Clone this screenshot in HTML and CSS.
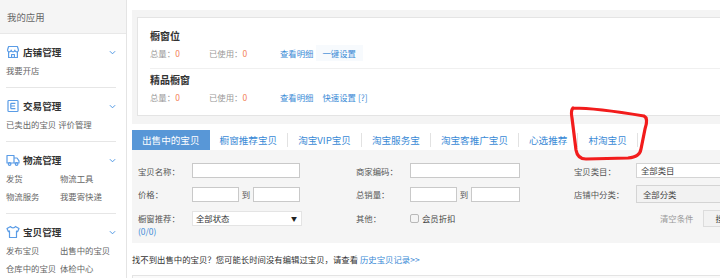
FILE: index.html
```html
<!DOCTYPE html>
<html lang="zh-CN">
<head>
    <meta charset="UTF-8">
    <title>出售中的宝贝</title>
    <link rel="stylesheet" href="styles.css">
</head>
<body>
<div class="page">
    <nav class="sidebar">
        <div class="side-head">我的应用</div>

        <div class="group">
            <div class="group-title">
                <svg class="gicon" viewBox="0 0 14 14"><path d="M1.5 5 L2.6 1.5 H11.4 L12.5 5"/><path d="M1.5 5 a1.83 1.83 0 0 0 3.67 0 a1.83 1.83 0 0 0 3.67 0 a1.83 1.83 0 0 0 3.67 0"/><path d="M2.6 7 V12.5 H11.4 V7"/><path d="M5.6 12.5 V9.5 H8.4 V12.5"/></svg>
                <span>店铺管理</span>
                <svg class="chev" viewBox="0 0 8 5"><path d="M1 1 L4 4 L7 1"/></svg>
            </div>
            <div class="links">
                <a>我要开店</a>
            </div>
        </div>

        <div class="group">
            <div class="group-title">
                <svg class="gicon" viewBox="0 0 14 14"><rect x="2" y="1.5" width="10" height="11" rx="0.8"/><path d="M4.8 4.3 H9.4 M4.8 7 H9 M4.8 9.7 H9.4 M4.8 4.3 V9.7"/></svg>
                <span>交易管理</span>
                <svg class="chev" viewBox="0 0 8 5"><path d="M1 1 L4 4 L7 1"/></svg>
            </div>
            <div class="links">
                <a class="wide">已卖出的宝贝 评价管理</a>
            </div>
        </div>

        <div class="group">
            <div class="group-title">
                <svg class="gicon" viewBox="0 0 14 14"><path d="M1 2.5 H8 V10 H1 Z"/><path d="M8 5 H11 L13 7.8 V10 H8"/><circle cx="3.6" cy="11" r="1.3"/><circle cx="10.6" cy="11" r="1.3"/></svg>
                <span>物流管理</span>
                <svg class="chev" viewBox="0 0 8 5"><path d="M1 1 L4 4 L7 1"/></svg>
            </div>
            <div class="links">
                <a>发货</a><a>物流工具</a>
                <a>物流服务</a><a>我要寄快递</a>
            </div>
        </div>

        <div class="group">
            <div class="group-title">
                <svg class="gicon" viewBox="0 0 14 14"><path d="M4.6 1.5 L1 3.6 L2.3 6.6 L3.5 6 V12.5 H10.5 V6 L11.7 6.6 L13 3.6 L9.4 1.5 C8.8 3.2 5.2 3.2 4.6 1.5 Z"/></svg>
                <span>宝贝管理</span>
                <svg class="chev" viewBox="0 0 8 5"><path d="M1 1 L4 4 L7 1"/></svg>
            </div>
            <div class="links">
                <a>发布宝贝</a><a>出售中的宝贝</a>
                <a>仓库中的宝贝</a><a>体检中心</a>
            </div>
        </div>
    </nav>

    <main class="main">
        <div class="shelf-panel">
            <div class="shelf-card">
                <div class="shelf-item first">
                    <div class="shelf-title">橱窗位</div>
                    <div class="shelf-info">
                        <span class="stat total">总量：<em>0</em></span>
                        <span class="stat used">已使用：<em>0</em></span>
                        <a class="link">查看明细</a>
                        <a class="link act hl">一键设置</a>
                    </div>
                </div>
                <div class="shelf-item">
                    <div class="shelf-title">精品橱窗</div>
                    <div class="shelf-info">
                        <span class="stat total">总量：<em>0</em></span>
                        <span class="stat used">已使用：<em>0</em></span>
                        <a class="link">查看明细</a>
                        <a class="link act">快速设置 [?]</a>
                    </div>
                </div>
            </div>
        </div>

        <div class="tabs">
            <a class="tab active">出售中的宝贝</a>
            <a class="tab">橱窗推荐宝贝</a><i class="sep"></i>
            <a class="tab">淘宝VIP宝贝</a><i class="sep"></i>
            <a class="tab">淘宝服务宝</a><i class="sep"></i>
            <a class="tab">淘宝客推广宝贝</a><i class="sep"></i>
            <a class="tab">心选推荐</a><i class="sep"></i>
            <a class="tab">村淘宝贝</a><i class="sep"></i>
        </div>

        <form class="filter">
            <div class="row">
                <div class="fg">
                    <label>宝贝名称：</label>
                    <input class="inp full" type="text">
                </div>
                <div class="fg second">
                    <label>商家编码：</label>
                    <input class="inp full2" type="text">
                </div>
                <div class="fg third">
                    <label>宝贝类目：</label>
                    <div class="box">全部类目</div>
                </div>
            </div>
            <div class="row mid">
                <div class="fg">
                    <label>价格：</label>
                    <input class="inp half" type="text"><span class="to">到</span><input class="inp half" type="text">
                </div>
                <div class="fg second">
                    <label>总销量：</label>
                    <input class="inp half" type="text"><span class="to">到</span><input class="inp half2" type="text">
                </div>
                <div class="fg third">
                    <label>店铺中分类：</label>
                    <div class="box grey">全部分类</div>
                </div>
            </div>
            <div class="row last">
                <div class="fg">
                    <label class="two">橱窗推荐：<br><span class="blue">(0/0)</span></label>
                    <div class="sel">全部状态<span class="arrow">▼</span></div>
                </div>
                <div class="fg second">
                    <label class="plain">其他：</label>
                    <span class="check"><i class="cb"></i>会员折扣</span>
                </div>
                <div class="fg third">
                    <span class="clear">清空条件</span>
                    <span class="btn">搜索</span>
                </div>
            </div>
        </form>

        <p class="notice">找不到出售中的宝贝？您可能长时间没有编辑过宝贝，请查看 <a class="link">历史宝贝记录&gt;&gt;</a></p>
        <div class="list-box"></div>
    </main>
</div>

<svg class="mark" viewBox="0 0 720 278" width="720" height="278">
    <path d="M573 108 C 590 108, 620 112, 644 116 C 648 118, 647 123, 645 129 L 641 149 C 640 155, 636 157, 628 158 L 586 159 C 580 159, 577 156, 576 150 L 572 118 C 571 113, 571 110, 573 108"/>
</svg>
</body>
</html>
```

FILE: styles.css
```css
html, body {
    margin: 0;
    padding: 0;
}
body {
    width: 720px;
    height: 278px;
    overflow: hidden;
    background: #fff;
    font-family: "Noto Sans CJK SC", "Liberation Sans", sans-serif;
    font-size: 8.4px;
    color: #555;
}
a {
    cursor: pointer;
}
.page {
    display: flex;
    height: 278px;
}

/* sidebar */
.sidebar {
    width: 126px;
    flex: none;
    border-right: 1px solid #e4e4e4;
}
.side-head {
    height: 33px;
    line-height: 34px;
    padding-left: 7px;
    background: #f5f5f5;
    border-bottom: 1px solid #e8e8e8;
    font-size: 9.4px;
    color: #666;
}
.group {
    margin: 0 10px 0 6px;
    padding: 9px 0 8px;
    border-bottom: 1px solid #e6e6e6;
}
.group:last-child {
    border-bottom: none;
}
.group-title {
    display: flex;
    align-items: center;
    height: 18px;
}
.group-title span {
    flex: 1;
    margin-left: 3px;
    font-size: 9.6px;
    font-weight: bold;
    color: #333;
}
.gicon {
    width: 14px;
    height: 14px;
    fill: none;
    stroke: #5a9ce6;
    stroke-width: 1.2;
    stroke-linejoin: round;
}
.chev {
    width: 7px;
    height: 5px;
    fill: none;
    stroke: #4a95e3;
    stroke-width: 1.1;
}
.links {
    display: grid;
    grid-template-columns: 54px auto;
}
.links a {
    line-height: 18px;
    color: #666;
    white-space: nowrap;
}
.links a.wide {
    grid-column: 1 / 3;
}

/* main */
.main {
    flex: 1;
    min-width: 0;
    padding: 10px 0 0 5px;
}
.shelf-panel {
    background: #f4f4f4;
    padding: 7px 0 8px 5px;
}
.shelf-card {
    background: #fff;
    border: 1px solid #e4e4e4;
    border-right: none;
    padding-left: 12px;
}
.shelf-item {
    padding: 3px 0 10px;
}
.shelf-item.first {
    padding: 10px 0 7px;
    border-bottom: 1px solid #f0f0f0;
}
.shelf-title {
    line-height: 16px;
    font-size: 10px;
    font-weight: bold;
    color: #333;
}
.shelf-info {
    display: flex;
    line-height: 16px;
    margin-top: 1px;
}
.stat {
    color: #999;
}
.stat em {
    font-style: normal;
    color: #f27a52;
}
.stat.total {
    width: 59px;
}
.stat.used {
    width: 71px;
}
.link {
    color: #3a8ad6;
}
.act {
    margin-left: 2px;
    padding: 0 7px;
}
.hl {
    background: #f7fafd;
}

/* tabs */
.tabs {
    display: flex;
    align-items: center;
    height: 21px;
    padding-top: 5px;
}
.tab {
    line-height: 20px;
    padding: 0 10px;
    font-size: 9.6px;
    color: #3a8ad6;
    white-space: nowrap;
}
.tab.active {
    background: #5897d7;
    color: #fff;
}
.sep {
    width: 1px;
    height: 14px;
    background: #e2e2e2;
}

/* filter */
.filter {
    margin: 0;
    padding: 13px 0 5px 6px;
    background: #f5f5f5;
    white-space: nowrap;
}
.row {
    display: flex;
    align-items: center;
    height: 15px;
    margin-bottom: 7px;
}
.row.mid {
    height: 18px;
}
.row.last {
    align-items: flex-start;
    height: 28px;
    margin-bottom: 0;
}
.fg {
    display: flex;
    align-items: center;
    width: 218px;
    flex: none;
}
.fg.third {
    flex: 1;
    width: auto;
    min-width: 0;
    overflow: hidden;
}
.fg label {
    width: 54px;
    flex: none;
    color: #555;
}
.fg.third label {
    width: 62px;
}
.inp {
    box-sizing: border-box;
    height: 15px;
    margin: 0;
    padding: 0 3px;
    border: 1px solid #c9c9c9;
    background: #fff;
    font: inherit;
}
.inp.full {
    width: 108px;
}
.inp.full2 {
    width: 110px;
}
.inp.half {
    width: 47px;
}
.inp.half2 {
    width: 49px;
}
.to {
    width: 14px;
    text-align: center;
    color: #555;
}
.box {
    box-sizing: border-box;
    width: 110px;
    flex: none;
    height: 15px;
    line-height: 13px;
    padding-left: 4px;
    border: 1px solid #d4d4d4;
    background: #fff;
    color: #444;
}
.box.grey {
    height: 18px;
    line-height: 16px;
    padding-left: 6px;
    background: #f2f2f2;
}
.row.last .fg {
    align-items: flex-start;
}
.fg label.two {
    line-height: 13px;
    padding-top: 2px;
}
.fg label.plain {
    line-height: 13px;
    padding-top: 2px;
}
.blue {
    color: #3a8ad6;
}
.sel {
    box-sizing: border-box;
    display: flex;
    justify-content: space-between;
    width: 110px;
    height: 15px;
    margin-top: 1px;
    line-height: 13px;
    padding: 0 4px 0 3px;
    border: 1px solid #e4e4e4;
    background: #fff;
    color: #333;
}
.arrow {
    font-size: 6px;
    color: #222;
}
.check {
    display: flex;
    align-items: center;
    line-height: 13px;
    padding-top: 2px;
    color: #444;
}
.cb {
    box-sizing: border-box;
    width: 9px;
    height: 9px;
    margin-right: 3px;
    border: 1px solid #b8b8b8;
    border-radius: 2px;
    background: #f4f4f4;
}
.clear {
    flex: none;
    margin-left: 86px;
    line-height: 13px;
    padding-top: 2px;
    color: #999;
}
.btn {
    flex: none;
    box-sizing: border-box;
    height: 17px;
    line-height: 15px;
    margin-left: 9px;
    padding: 0 12px;
    border: 1px solid #dcdcdc;
    background: #f2f2f2;
    color: #444;
}

/* below filter */
.notice {
    margin: 0;
    line-height: 32px;
    color: #333;
}
.list-box {
    height: 20px;
    border: 1px solid #e4e4e4;
    border-right: none;
    background: #fafafa;
}

/* hand-drawn highlight on the screenshot */
.mark {
    position: absolute;
    top: 0;
    left: 0;
    pointer-events: none;
    fill: none;
    stroke: #f21c1c;
    stroke-width: 3.2;
    stroke-linecap: round;
    stroke-linejoin: round;
}
```
